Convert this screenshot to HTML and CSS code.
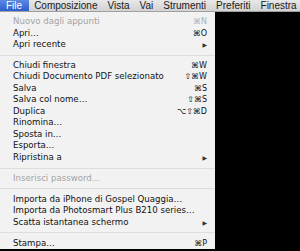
FILE: index.html
```html
<!DOCTYPE html>
<html>
<head>
<meta charset="utf-8">
<link rel="stylesheet" href="styles.css">
</head>
<body>
<div class="menubar">
  <span class="mb-item active">File</span>
  <span class="mb-item">Composizione</span>
  <span class="mb-item">Vista</span>
  <span class="mb-item">Vai</span>
  <span class="mb-item">Strumenti</span>
  <span class="mb-item">Preferiti</span>
  <span class="mb-item">Finestra</span>
</div>
<div class="menu">
  <div class="row disabled"><span>Nuovo dagli appunti</span><span class="sc">⌘N</span></div>
  <div class="row"><span>Apri…</span><span class="sc">⌘O</span></div>
  <div class="row"><span>Apri recente</span><span class="arrow">▶</span></div>
  <div class="sep"></div>
  <div class="row"><span>Chiudi finestra</span><span class="sc">⌘W</span></div>
  <div class="row"><span>Chiudi Documento PDF selezionato</span><span class="sc">⇧⌘W</span></div>
  <div class="row"><span>Salva</span><span class="sc">⌘S</span></div>
  <div class="row"><span>Salva col nome…</span><span class="sc">⇧⌘S</span></div>
  <div class="row"><span>Duplica</span><span class="sc">⌥⇧⌘D</span></div>
  <div class="row"><span>Rinomina…</span></div>
  <div class="row"><span>Sposta in…</span></div>
  <div class="row"><span>Esporta…</span></div>
  <div class="row"><span>Ripristina a</span><span class="arrow">▶</span></div>
  <div class="sep"></div>
  <div class="row disabled"><span>Inserisci password…</span></div>
  <div class="sep"></div>
  <div class="row"><span>Importa da iPhone di Gospel Quaggia…</span></div>
  <div class="row"><span>Importa da Photosmart Plus B210 series…</span></div>
  <div class="row"><span>Scatta istantanea schermo</span><span class="arrow">▶</span></div>
  <div class="sep"></div>
  <div class="row"><span>Stampa…</span><span class="sc">⌘P</span></div>
</div>
</body>
</html>
```
FILE: styles.css
```css
html, body {
  margin: 0;
  padding: 0;
  background: #000;
  width: 300px;
  height: 251px;
  overflow: hidden;
  font-family: "DejaVu Sans", sans-serif;
}
.menubar {
  height: 11px;
  background: linear-gradient(#e8e8e8, #d2d2d2);
  border-bottom: 1px solid #a0a0a0;
  display: flex;
  align-items: center;
  font-family: "Liberation Sans", Arial, sans-serif;
  font-size: 10px;
  color: #1a1a1a;
  white-space: nowrap;
  overflow: hidden;
}
.mb-item {
  padding: 0 5px;
  line-height: 11px;
}
.mb-item.active {
  background: linear-gradient(#5d88e2, #2c5ecf);
  color: #fff;
  padding: 0 7px 0 6px;
}
.menu {
  width: 215px;
  background: #f2f2f2;
  padding-top: 4px;
  font-size: 8.6px;
  color: #111;
}
.row {
  height: 11.5px;
  line-height: 11.5px;
  display: flex;
  justify-content: space-between;
  padding: 0 8px 0 13px;
  white-space: nowrap;
}
.row.disabled {
  color: #a3a3a3;
}
.sc {
  font-size: 8px;
}
.disabled .sc {
  color: #b0b0b0;
}
.arrow {
  font-size: 6px;
  color: #333;
}
.sep {
  height: 1px;
  margin: 4.2px 0;
  background: #dedede;
}
```
